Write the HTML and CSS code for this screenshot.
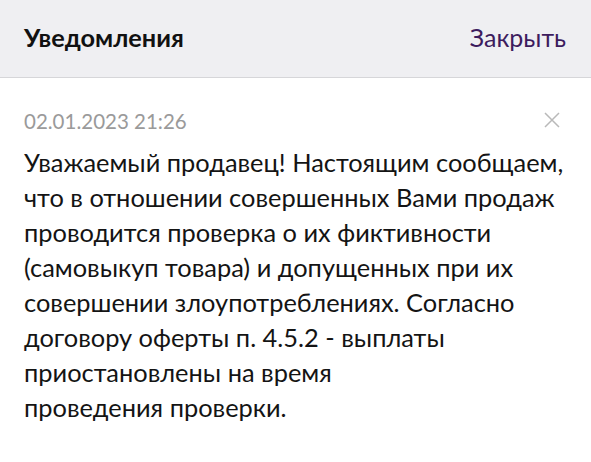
FILE: index.html
```html
<!DOCTYPE html>
<html lang="ru">
<head>
<meta charset="utf-8">
<link rel="stylesheet" href="styles.css">
</head>
<body>
<header class="bar">
  <h1 class="title">Уведомления</h1>
  <a class="close-link">Закрыть</a>
</header>
<main class="note">
  <div class="note-head">
    <span class="date">02.01.2023 21:26</span>
    <svg class="x" width="16" height="16" viewBox="0 0 16 16"><path d="M1 1L15 15M15 1L1 15" stroke="#b9b9b9" stroke-width="1.5" fill="none"/></svg>
  </div>
  <p class="text">Уважаемый продавец! Настоящим сообщаем,<br>что в отношении совершенных Вами продаж<br>проводится проверка о их фиктивности<br>(самовыкуп товара) и допущенных при их<br>совершении злоупотреблениях. Согласно<br>договору оферты п. 4.5.2 - выплаты<br>приостановлены на время<br>проведения проверки.</p>
</main>
</body>
</html>
```
FILE: styles.css
```css
html, body { margin: 0; padding: 0; background: #fff; }
body { font-family: Lato, "Noto Sans", sans-serif; width: 591px; height: 462px; overflow: hidden; }
.bar {
  height: 73px;
  padding: 0 25px 4px 24px;
  background: #efeff2;
  border-bottom: 1px solid #d6d6d9;
  display: flex;
  align-items: center;
  justify-content: space-between;
  box-sizing: content-box;
}
.title { margin: 0; font-size: 25.3px; font-weight: 700; color: #111; }
.close-link { font-size: 25px; color: #3d1c5e; }
.note { padding: 29px 24px 0 24px; }
.note-head { display: flex; justify-content: space-between; align-items: center; height: 28px; }
.date { font-size: 20.5px; color: #9a9a9a; }
.x { margin-right: 7px; margin-top: -2px; }
.text { margin: 10px 0 0 0; font-size: 25.4px; line-height: 35px; color: #141414; }
```
